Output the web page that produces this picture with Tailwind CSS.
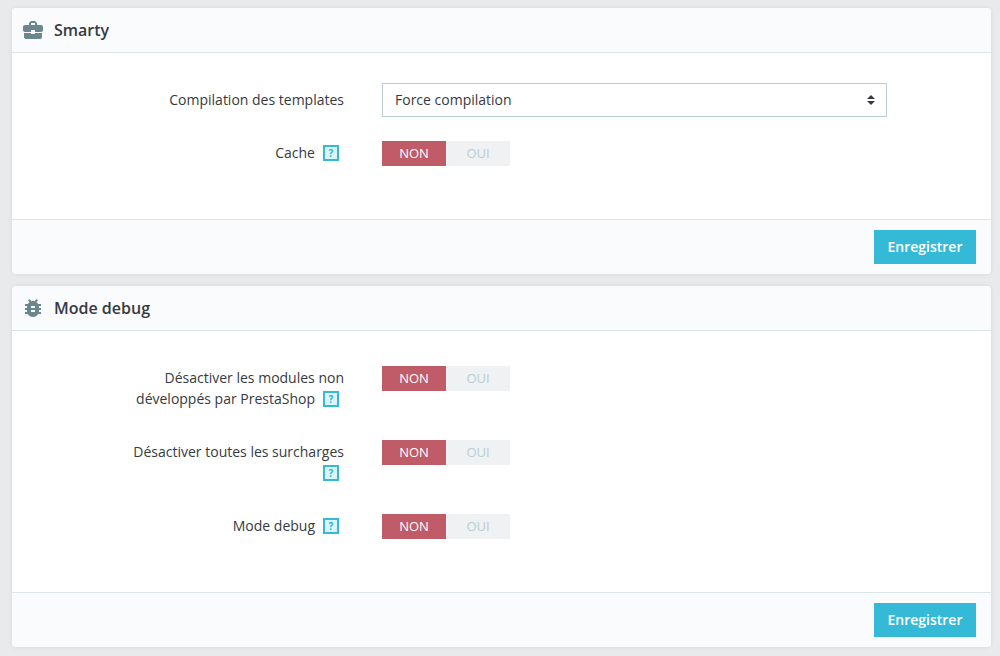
<!DOCTYPE html>
<html lang="fr">
<head>
<meta charset="utf-8">
<meta name="viewport" content="width=device-width, initial-scale=1">
<title>Performances</title>
<script src="https://cdn.jsdelivr.net/npm/@tailwindcss/browser@4"></script>
</head>
<body class="min-h-screen bg-[#e8eaec] pt-2 pr-[9px] pb-2 pl-3 font-['Open_Sans',sans-serif] text-sm leading-[21px] text-[#363a41]">
<main class="flex flex-col gap-3">

  <form class="rounded bg-white shadow-[0_0_4px_rgba(0,0,0,0.08)]">
    <header class="flex h-[45px] items-center gap-[9px] rounded-t border-b border-[#dbe6e9] bg-[#fafbfc] pl-[9px]">
      <svg class="size-6 fill-[#6c868e]" viewBox="0 0 24 24" aria-hidden="true"><path d="M10 16v-1H3.01L3 19c0 1.11.89 2 2 2h14c1.11 0 2-.89 2-2v-4h-7v1h-4zm10-9h-4.01V5l-2-2h-4l-2 2v2H4c-1.1 0-2 .9-2 2v3c0 1.11.89 2 2 2h6v-2h4v2h6c1.1 0 2-.9 2-2V9c0-1.1-.9-2-2-2zm-6 0h-4V5h4v2z"/></svg>
      <h2 class="text-base font-semibold">Smarty</h2>
    </header>
    <div class="flex flex-col gap-6 pt-[30px] pb-[53px]">
      <div class="grid grid-cols-[332fr_543fr_104fr] items-center">
        <label for="compilation" class="pb-0.5 text-right">Compilation des templates</label>
        <div class="relative ml-[38px]">
          <select id="compilation" class="block h-[34px] w-full appearance-none border border-[#bbcdd2] bg-white px-3 text-sm">
            <option>Force compilation</option>
          </select>
          <svg class="pointer-events-none absolute top-3 right-3 h-[10px] w-2 fill-[#363a41]" viewBox="0 0 8 10" aria-hidden="true"><path d="M4 0L8 4H0zM0 6h8L4 10z"/></svg>
        </div>
      </div>
      <div class="grid grid-cols-[332fr_543fr_104fr] items-start">
        <div id="l-cache" class="flex items-center justify-end gap-2 pt-px pr-[5px]">Cache <button type="button" aria-label="Aide" class="size-4 border-2 border-[#34bad7] bg-[#dcf4f9] text-center text-[10px] leading-3 font-bold text-[#25b9d7]">?</button></div>
        <div role="radiogroup" aria-labelledby="l-cache" class="ml-[38px] flex h-[25px] text-[13px] leading-6">
          <label class="w-16 bg-[#eff1f2] text-center font-medium text-[#bbcdd2] has-checked:bg-[#c05c67] has-checked:text-white"><input type="radio" name="cache" class="sr-only" checked>NON</label>
          <label class="w-16 bg-[#eff1f2] text-center font-medium text-[#bbcdd2] has-checked:bg-[#70b580] has-checked:text-white"><input type="radio" name="cache" class="sr-only">OUI</label>
        </div>
      </div>
    </div>
    <footer class="flex justify-end rounded-b border-t border-[#dbe6e9] bg-[#fafbfc] py-[10px] pr-[15px]">
      <button type="submit" class="h-[34px] w-[102px] bg-[#34bad7] text-sm font-semibold text-white">Enregistrer</button>
    </footer>
  </form>

  <form class="rounded bg-white shadow-[0_0_4px_rgba(0,0,0,0.08)]">
    <header class="flex h-[45px] items-center gap-[9px] rounded-t border-b border-[#dbe6e9] bg-[#fafbfc] pl-[9px]">
      <svg class="size-6 fill-[#6c868e]" viewBox="0 0 24 24" aria-hidden="true"><path d="M20 8h-2.81c-.45-.78-1.07-1.45-1.82-1.96L17 4.41 15.59 3l-2.17 2.17C12.96 5.06 12.49 5 12 5c-.49 0-.96.06-1.41.17L8.41 3 7 4.41l1.62 1.63C7.88 6.55 7.26 7.22 6.81 8H4v2h2.09c-.05.33-.09.66-.09 1v1H4v2h2v1c0 .34.04.67.09 1H4v2h2.81c1.04 1.79 2.97 3 5.19 3s4.15-1.21 5.19-3H20v-2h-2.09c.05-.33.09-.66.09-1v-1h2v-2h-2v-1c0-.34-.04-.67-.09-1H20V8zm-6 8h-4v-2h4v2zm0-4h-4v-2h4v2z"/></svg>
      <h2 class="text-base font-semibold">Mode debug</h2>
    </header>
    <div class="flex flex-col gap-[31px] pt-[35px] pb-[53px]">
      <div class="grid grid-cols-[332fr_543fr_104fr] items-start">
        <div id="l-modules" class="pt-px text-right">Désactiver les modules non
          <div class="flex items-center justify-end gap-2 pr-[5px]">développés par PrestaShop <button type="button" aria-label="Aide" class="size-4 border-2 border-[#34bad7] bg-[#dcf4f9] text-center text-[10px] leading-3 font-bold text-[#25b9d7]">?</button></div>
        </div>
        <div role="radiogroup" aria-labelledby="l-modules" class="ml-[38px] flex h-[25px] text-[13px] leading-6">
          <label class="w-16 bg-[#eff1f2] text-center font-medium text-[#bbcdd2] has-checked:bg-[#c05c67] has-checked:text-white"><input type="radio" name="modules" class="sr-only" checked>NON</label>
          <label class="w-16 bg-[#eff1f2] text-center font-medium text-[#bbcdd2] has-checked:bg-[#70b580] has-checked:text-white"><input type="radio" name="modules" class="sr-only">OUI</label>
        </div>
      </div>
      <div class="grid grid-cols-[332fr_543fr_104fr] items-start">
        <div id="l-overrides" class="pt-px text-right">Désactiver toutes les surcharges
          <div class="flex h-[21px] items-center justify-end pr-[5px]"><button type="button" aria-label="Aide" class="size-4 border-2 border-[#34bad7] bg-[#dcf4f9] text-center text-[10px] leading-3 font-bold text-[#25b9d7]">?</button></div>
        </div>
        <div role="radiogroup" aria-labelledby="l-overrides" class="ml-[38px] flex h-[25px] text-[13px] leading-6">
          <label class="w-16 bg-[#eff1f2] text-center font-medium text-[#bbcdd2] has-checked:bg-[#c05c67] has-checked:text-white"><input type="radio" name="overrides" class="sr-only" checked>NON</label>
          <label class="w-16 bg-[#eff1f2] text-center font-medium text-[#bbcdd2] has-checked:bg-[#70b580] has-checked:text-white"><input type="radio" name="overrides" class="sr-only">OUI</label>
        </div>
      </div>
      <div class="grid grid-cols-[332fr_543fr_104fr] items-start">
        <div id="l-debug" class="flex items-center justify-end gap-2 pt-px pr-[5px]">Mode debug <button type="button" aria-label="Aide" class="size-4 border-2 border-[#34bad7] bg-[#dcf4f9] text-center text-[10px] leading-3 font-bold text-[#25b9d7]">?</button></div>
        <div role="radiogroup" aria-labelledby="l-debug" class="ml-[38px] flex h-[25px] text-[13px] leading-6">
          <label class="w-16 bg-[#eff1f2] text-center font-medium text-[#bbcdd2] has-checked:bg-[#c05c67] has-checked:text-white"><input type="radio" name="debug" class="sr-only" checked>NON</label>
          <label class="w-16 bg-[#eff1f2] text-center font-medium text-[#bbcdd2] has-checked:bg-[#70b580] has-checked:text-white"><input type="radio" name="debug" class="sr-only">OUI</label>
        </div>
      </div>
    </div>
    <footer class="flex justify-end rounded-b border-t border-[#dbe6e9] bg-[#fafbfc] py-[10px] pr-[15px]">
      <button type="submit" class="h-[34px] w-[102px] bg-[#34bad7] text-sm font-semibold text-white">Enregistrer</button>
    </footer>
  </form>

</main>
</body>
</html>
